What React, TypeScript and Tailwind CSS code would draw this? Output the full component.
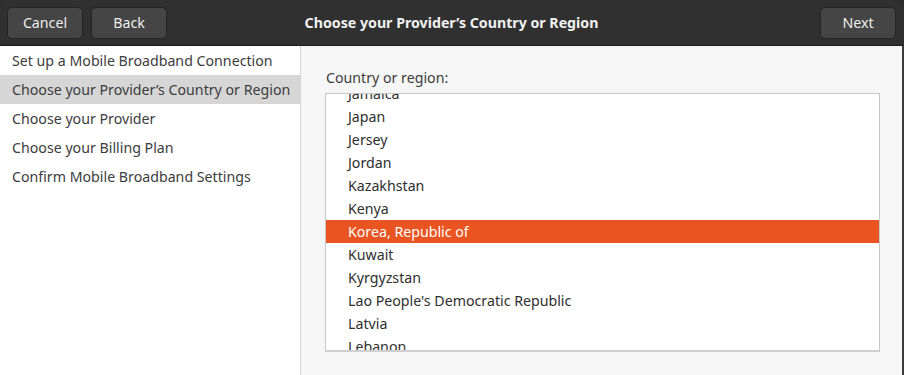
import React from 'react';

const steps = [
  'Set up a Mobile Broadband Connection',
  'Choose your Provider\u2019s Country or Region',
  'Choose your Provider',
  'Choose your Billing Plan',
  'Confirm Mobile Broadband Settings',
];

const countries = [
  'Jamaica',
  'Japan',
  'Jersey',
  'Jordan',
  'Kazakhstan',
  'Kenya',
  'Korea, Republic of',
  'Kuwait',
  'Kyrgyzstan',
  "Lao People's Democratic Republic",
  'Latvia',
  'Lebanon',
];

const HeaderButton = ({ label }: { label: string }) => (
  <button className="h-[32px] w-[76px] rounded-[5px] border border-[#252525] bg-[#454545] text-[14.2px] text-[#eeeeec]">
    {label}
  </button>
);

export default function App() {
  const current = 1;
  const selected = 'Korea, Republic of';

  return (
    <div
      className="flex h-[375px] w-[904px] flex-col overflow-hidden bg-[#2c2c2c]"
      style={{ fontFamily: '"Noto Sans", "DejaVu Sans", sans-serif' }}
    >
      <header className="mr-[1px] grid h-[46px] shrink-0 grid-cols-[1fr_auto_1fr] items-center rounded-t-[7px] border-b border-[#1b1b1b] bg-[#303030] pl-[7px] pr-[7px]">
        <div className="flex gap-2">
          <HeaderButton label="Cancel" />
          <HeaderButton label="Back" />
        </div>
        <div className="text-center text-[14.2px] font-bold text-[#f2f2f2]">
          Choose your Provider’s Country or Region
        </div>
        <div className="flex justify-end">
          <HeaderButton label="Next" />
        </div>
      </header>

      <div className="flex min-h-0 flex-1 border-r-2 border-[#3a3a3a]">
        <aside className="w-[301px] shrink-0 border-r border-[#d5d5d5] bg-white">
          {steps.map((step, i) => (
            <div
              key={step}
              className={`flex h-[29px] items-center pl-[12px] text-[14.2px] text-[#3c3c3c] ${
                i === current ? 'bg-[#d6d6d6]' : ''
              }`}
            >
              {step}
            </div>
          ))}
        </aside>

        <main className="flex-1 bg-[#f6f6f6] pl-[24px] pr-[22px] pt-[23px]">
          <div className="pl-[1px] text-[14.2px] leading-[18px] text-[#3c3c3c]">Country or region:</div>
          <div className="mt-[6px] h-[259px] overflow-hidden border border-b-2 border-[#c6c6c6] border-b-[#cfcfcf] bg-white">
            <div className="-mt-[12px]">
              {countries.map((c) => (
                <div
                  key={c}
                  className={`flex h-[23px] items-center pl-[22px] text-[14.2px] ${
                    c === selected ? 'bg-[#e95420] text-white' : 'text-[#2e2e2e]'
                  }`}
                >
                  {c}
                </div>
              ))}
            </div>
          </div>
        </main>
      </div>
    </div>
  );
}
